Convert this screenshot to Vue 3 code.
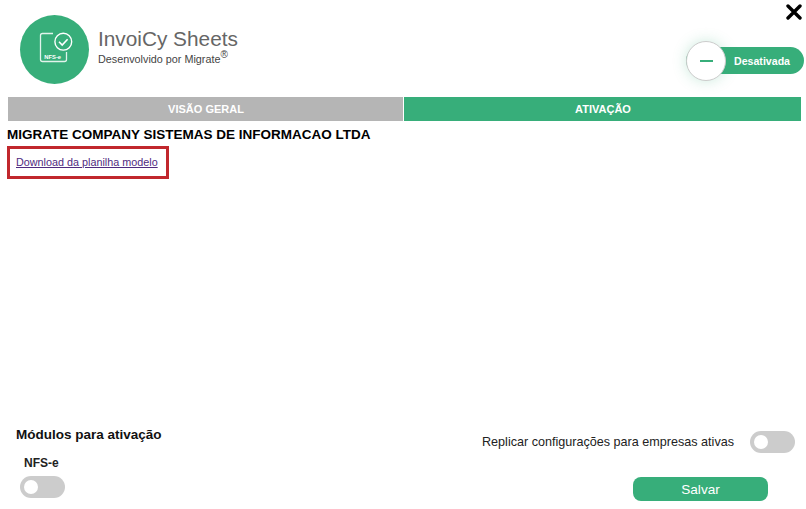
<template>
    <div class="modal">
        <svg class="close_icon" viewBox="0 0 16 16" width="16" height="16">
            <path d="M2 2 L14 14 M14 2 L2 14" stroke="#000" stroke-width="3.4" stroke-linecap="round" fill="none" />
        </svg>

        <header class="modal_header">
            <div class="app_info">
                <div class="app_logo">
                    <svg viewBox="0 0 69 69" width="69" height="69">
                        <path d="M33 18.5 H22.5 Q20.5 18.5 20.5 20.5 V44.5 Q20.5 46.5 22.5 46.5 H44.5 Q46.5 46.5 46.5 44.5 V37" stroke="#fff" stroke-width="1.3" fill="none" opacity="0.85" />
                        <circle cx="43.3" cy="26.7" r="8.4" stroke="#fff" stroke-width="1.4" fill="#37ae7a" />
                        <path d="M39 26.7 L42.2 30 L47.6 24.2" stroke="#fff" stroke-width="1.6" fill="none" />
                        <text x="24.3" y="43.6" class="logo_text">NFS-e</text>
                    </svg>
                </div>
                <div class="app_text">
                    <h1>InvoiCy Sheets</h1>
                    <p>Desenvolvido por Migrate<sup>®</sup></p>
                </div>
            </div>
            <div class="status_badge">
                <span class="status_knob"><i></i></span>
                <span class="status_label">Desativada</span>
            </div>
        </header>

        <nav class="tabs">
            <div v-for="tab in tabs" :key="tab.label" class="tab" :class="{ active: tab.active }">{{ tab.label }}</div>
        </nav>

        <main class="content">
            <h2>MIGRATE COMPANY SISTEMAS DE INFORMACAO LTDA</h2>
            <div class="download_box">
                <a href="#">Download da planilha modelo</a>
            </div>
        </main>

        <footer class="modal_footer">
            <div class="modules">
                <h3>Módulos para ativação</h3>
                <div class="module_name">NFS-e</div>
                <span class="switch"></span>
            </div>
            <div class="actions">
                <div class="replicate">
                    <span>Replicar configurações para empresas ativas</span>
                    <span class="switch"></span>
                </div>
                <button class="save_button">Salvar</button>
            </div>
        </footer>
    </div>
</template>

<script setup>
    const tabs = [
        { label: "VISÃO GERAL", active: false },
        { label: "ATIVAÇÃO", active: true }
    ];
</script>

<style scoped>
    .modal {
        position: relative;
        display: flex;
        flex-direction: column;
        width: 806px;
        height: 509px;
        overflow: hidden;
        background: #fff;
        font-family: "Liberation Sans", Arial, sans-serif;
    }

    .close_icon {
        position: absolute;
        top: 4px;
        right: 4px;
    }

    .modal_header {
        display: flex;
        justify-content: space-between;
        height: 97px;
        padding: 15px 2px 0 20px;
        box-sizing: border-box;
    }

    .app_info {
        display: flex;
        gap: 9px;
    }

    .app_logo {
        width: 69px;
        height: 69px;
        border-radius: 50%;
        background: #37ae7a;
    }

    .logo_text {
        font-size: 5.8px;
        font-weight: 700;
        fill: #fff;
    }

    .app_text h1 {
        margin: 11px 0 0;
        font-size: 20.8px;
        line-height: 25px;
        font-weight: 400;
        color: #666;
    }

    .app_text p {
        margin: 1px 0 0;
        font-size: 10.8px;
        line-height: 14px;
        color: #444;
    }

    .app_text sup {
        font-size: 10px;
        line-height: 0;
    }

    .status_badge {
        position: relative;
        align-self: flex-start;
        display: flex;
        align-items: center;
        justify-content: flex-end;
        width: 118px;
        height: 27px;
        margin-top: 32px;
        padding-right: 14px;
        box-sizing: border-box;
        border-radius: 14px;
        background: #37ae7a;
    }

    .status_knob {
        position: absolute;
        left: 0;
        top: -6px;
        display: flex;
        align-items: center;
        justify-content: center;
        width: 40px;
        height: 40px;
        box-sizing: border-box;
        border: 1px solid #ccc;
        border-radius: 50%;
        background: #fff;
        box-shadow: 0 0 14px rgba(55, 174, 122, 0.25);
    }

    .status_knob i {
        width: 13px;
        height: 2px;
        background: #37ae7a;
    }

    .status_label {
        font-size: 10.6px;
        font-weight: 700;
        color: #fff;
    }

    .tabs {
        display: flex;
        gap: 1px;
        margin: 0 5px 0 8px;
    }

    .tab {
        width: 395px;
        height: 24px;
        padding-left: 1px;
        box-sizing: border-box;
        line-height: 24px;
        text-align: center;
        font-size: 11px;
        font-weight: 700;
        color: #fff;
        background: #b5b5b5;
    }

    .tab.active {
        flex: 1;
        background: #37ae7a;
    }

    .content {
        flex: 1;
        padding: 6px 0 0 7px;
    }

    .content h2 {
        margin: 0;
        font-size: 13.5px;
        line-height: 15px;
        color: #000;
    }

    .download_box {
        width: 162px;
        height: 33px;
        margin-top: 4px;
        padding: 6px 0 0 6px;
        box-sizing: border-box;
        border: 3px solid #c1272d;
        font-size: 10.8px;
        line-height: 14px;
    }

    .download_box a {
        color: #4f2a80;
    }

    .modal_footer {
        display: flex;
        justify-content: space-between;
        height: 82px;
        padding: 0 11px 0 16px;
        box-sizing: border-box;
    }

    .modules h3 {
        margin: 0;
        font-size: 13.5px;
        line-height: 16px;
        color: #111;
    }

    .module_name {
        margin: 13px 0 0 8px;
        font-size: 12px;
        line-height: 14px;
        font-weight: 700;
        color: #222;
    }

    .modules .switch {
        margin: 6px 0 0 4px;
    }

    .switch {
        position: relative;
        display: block;
        width: 45px;
        height: 22px;
        border-radius: 11px;
        background: #ccc;
    }

    .switch::before {
        content: "";
        position: absolute;
        top: 4px;
        left: 4px;
        width: 14px;
        height: 14px;
        border-radius: 50%;
        background: #fff;
    }

    .actions {
        display: flex;
        flex-direction: column;
        align-items: flex-end;
        margin-top: 4px;
    }

    .replicate {
        display: flex;
        align-items: center;
        gap: 16px;
        font-size: 12.6px;
        color: #222;
    }

    .save_button {
        width: 135px;
        height: 24px;
        margin: 24px 27px 0 0;
        padding: 0;
        border: 0;
        border-radius: 8px;
        font-family: inherit;
        font-size: 13.6px;
        color: #fff;
        background: #37ae7a;
    }
</style>
